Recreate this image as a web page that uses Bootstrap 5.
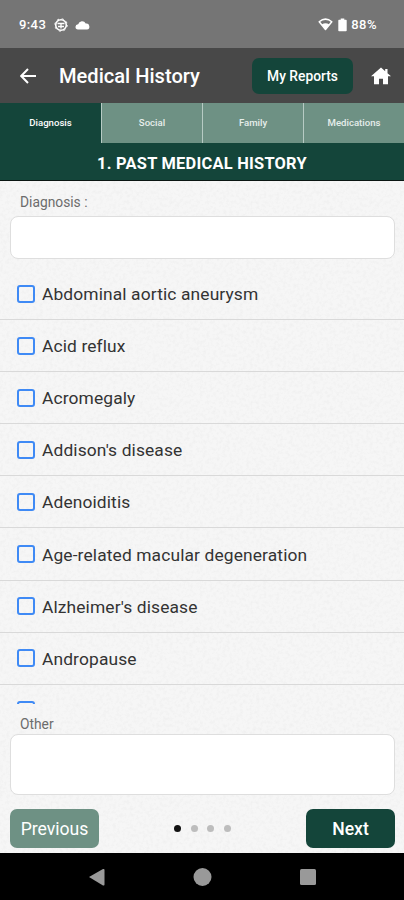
<!DOCTYPE html>
<html lang="en">
<head>
<meta charset="utf-8">
<meta name="viewport" content="width=device-width, initial-scale=1">
<title>Medical History</title>
<link href="https://cdn.jsdelivr.net/npm/bootstrap@5.3.0/dist/css/bootstrap.min.css" rel="stylesheet">
<style>
body{font-family:Roboto,"Liberation Sans",sans-serif;background:#000;line-height:1.2}
svg{display:block;flex:none}
.screen{width:404px;height:900px}
.status{height:48px;background:#757575;font-size:13px;font-weight:500;padding:1px 27px 0 19px}
.appbar{height:55px;background:#484848;padding:0 13px 0 20px}
.appbar h1{font-size:20.1px;font-weight:500;margin:1px 0 0 23px;line-height:24px}
.reports{width:101px;height:36px;border-radius:7px;background:#14453a;font-size:13.8px;font-weight:500;padding:1px 0 0;margin-right:18px}
.tabs{height:40px;background:#6e9184;font-size:9.6px;font-weight:500}
.tabs .nav-link{color:#e6eeeb;padding:0;border-left:1px solid #b7cbc4}
.tabs .nav-link.active{background:#14453a;color:#fff;border-left:0}
.heading{height:38px;background:#14453a;border-bottom:1px solid #0a1512;font-size:16.4px;letter-spacing:.25px;font-weight:700;padding-top:4px}
.paper{height:672px;background:#f6f6f6 url("data:image/svg+xml,%3Csvg xmlns='http://www.w3.org/2000/svg' width='200' height='200'%3E%3Cfilter id='n'%3E%3CfeTurbulence type='fractalNoise' baseFrequency='.3' numOctaves='3' stitchTiles='stitch'/%3E%3CfeColorMatrix values='0 0 0 0 .5 0 0 0 0 .5 0 0 0 0 .5 .25 0 0 0 -.11'/%3E%3C/filter%3E%3Crect width='200' height='200' filter='url(%23n)'/%3E%3C/svg%3E")}
.lbl{font-size:13.8px;color:#6c6c6c;padding-left:20px;line-height:18px}
.field{margin:0 9px 0 10px;border:1px solid #dedede;border-radius:8px;background:#fff;box-shadow:none;width:auto}
.conditions{height:436px;overflow:hidden}
.conditions .item{height:52.1px;flex:none;border-bottom:1px solid #d9d9d9;padding-left:17px;gap:7px;font-size:17.4px;color:#333;letter-spacing:.12px}
.conditions .item span{padding-top:2px}
.conditions .form-check-input{width:18px;height:18px;border:2px solid #3f8af5;border-radius:3px;background:transparent;margin:0;flex:none}
.pager{padding:0 9px 0 10px}
.pager .btn{width:89px;height:39px;padding:2px 0 0;border-radius:7px;border:0;font-size:17.6px;color:#fff}
.prev{background:#6e9184!important}.next{background:#14453a!important;font-weight:500}
.dot{width:7px;height:7px;border-radius:50%;background:#bdbdbd}
.dot.on{background:#111}
.sysnav{height:47px;background:#000}
</style>
</head>
<body>
<div class="screen d-flex flex-column overflow-hidden">
  <div class="status d-flex align-items-center text-white">
    <span style="letter-spacing:.4px">9:43</span>
    <svg class="ms-2" width="14" height="14" viewBox="0 0 14 14" fill="none" stroke="#fff"><circle cx="7" cy="7" r="5.3" stroke-width="1.6"/><circle cx="7" cy="7" r="6.2" stroke-width="1" stroke-dasharray="2 2.87"/><path d="M3.5 5.500h7M4 8.500h6M7 5.500v5" stroke-width="1.3"/></svg>
    <svg style="margin-left:7px" width="15" height="10" viewBox="0 0 15 10" fill="#fff"><path d="M3 9.5a2.6 2.6 0 0 1 .2-5.2A4 4 0 0 1 10.7 3.600 3 3 0 0 1 12 9.500z"/></svg>
    <svg class="ms-auto" width="15" height="13" viewBox="0 0 15 13"><path d="M1.200 3.800Q7.500-1.500 13.800 3.800L7.500 11.500z" fill="none" stroke="#fff" stroke-width="1.500" stroke-linejoin="round"/><path d="M3.700 6.500Q7.500 4 11.300 6.500L7.500 11.500z" fill="#fff"/></svg>
    <svg style="margin:0 4px 0 5px" width="9" height="14" viewBox="0 0 9 14" fill="#fff"><path d="M2.700.500h3.600v1.300H8q.7 0 .7.700v10q0 .8-.8.800H1.100q-.8 0-.8-.8v-10q0-.7.7-.7h1.700z"/></svg>
    <span style="letter-spacing:.5px">88%</span>
  </div>
  <header class="appbar d-flex align-items-center text-white">
    <svg width="16" height="16" viewBox="0 0 16 16" fill="none" stroke="#fff" stroke-width="2"><path d="M16 8H1.500M8 1L1.200 8 8 15"/></svg>
    <h1>Medical History</h1>
    <button class="btn reports text-white ms-auto">My Reports</button>
    <svg width="20" height="18" viewBox="0 0 20 18" fill="#fff"><path d="M10 .500L0 9.300h3V17.200h5v-5.500h4v5.500h5V9.300h3L16.500 6.200V2h-2.300v2.200z"/></svg>
  </header>
  <nav class="tabs nav nav-fill flex-nowrap">
    <a class="nav-link active d-flex align-items-center justify-content-center w-25">Diagnosis</a>
    <a class="nav-link d-flex align-items-center justify-content-center w-25">Social</a>
    <a class="nav-link d-flex align-items-center justify-content-center w-25">Family</a>
    <a class="nav-link d-flex align-items-center justify-content-center w-25">Medications</a>
  </nav>
  <div class="heading text-white d-flex align-items-center justify-content-center">1. PAST MEDICAL HISTORY</div>
  <main class="paper d-flex flex-column">
    <label class="lbl" style="padding-top:12px;height:35px">Diagnosis :</label>
    <input class="field form-control" style="height:43px" aria-label="Diagnosis">
    <div class="conditions d-flex flex-column" style="margin-top:9px">
      <label class="item d-flex align-items-center"><input class="form-check-input" type="checkbox"><span>Abdominal aortic aneurysm</span></label>
      <label class="item d-flex align-items-center"><input class="form-check-input" type="checkbox"><span>Acid reflux</span></label>
      <label class="item d-flex align-items-center"><input class="form-check-input" type="checkbox"><span>Acromegaly</span></label>
      <label class="item d-flex align-items-center"><input class="form-check-input" type="checkbox"><span>Addison's disease</span></label>
      <label class="item d-flex align-items-center"><input class="form-check-input" type="checkbox"><span>Adenoiditis</span></label>
      <label class="item d-flex align-items-center"><input class="form-check-input" type="checkbox"><span>Age-related macular degeneration</span></label>
      <label class="item d-flex align-items-center"><input class="form-check-input" type="checkbox"><span>Alzheimer's disease</span></label>
      <label class="item d-flex align-items-center"><input class="form-check-input" type="checkbox"><span>Andropause</span></label>
      <label class="item d-flex align-items-center"><input class="form-check-input" type="checkbox"></label>
    </div>
    <label class="lbl" style="padding-top:11px;height:30px">Other</label>
    <textarea class="field form-control" style="height:61px;resize:none" aria-label="Other"></textarea>
    <div class="pager d-flex align-items-center justify-content-between" style="margin-top:14px">
      <button class="btn prev">Previous</button>
      <div class="d-flex" style="gap:9.500px"><span class="dot on"></span><span class="dot"></span><span class="dot"></span><span class="dot"></span></div>
      <button class="btn next">Next</button>
    </div>
  </main>
  <div class="sysnav d-flex align-items-center justify-content-center">
    <svg width="404" height="47" viewBox="0 0 404 47" fill="#999"><path d="M89 24L103 16Q104.500 15.500 104.500 17V31.500Q104.500 33 103 32.400z"/><circle cx="202.500" cy="24" r="9"/><rect x="300" y="16" width="16" height="16" rx="1.500"/></svg>
  </div>
</div>
<script src="https://cdn.jsdelivr.net/npm/bootstrap@5.3.0/dist/js/bootstrap.bundle.min.js"></script>
</body>
</html>
